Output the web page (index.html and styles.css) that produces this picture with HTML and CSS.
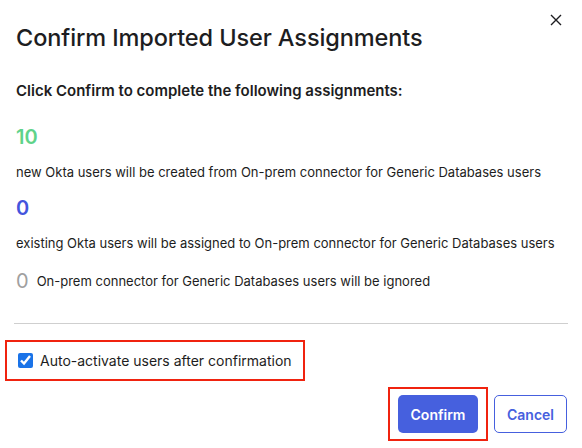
FILE: index.html
```html
<!DOCTYPE html>
<html lang="en">
<head>
<meta charset="utf-8">
<title>Confirm Imported User Assignments</title>
<link rel="stylesheet" href="styles.css">
</head>
<body>
<div class="dialog">
  <button class="close" aria-label="Close">
    <svg width="12" height="12" viewBox="0 0 12 12"><path d="M1 1L11 11M11 1L1 11" stroke="#1d1d21" stroke-width="1.4" fill="none"/></svg>
  </button>
  <h1 class="title">Confirm Imported User Assignments</h1>
  <p class="lead">Click Confirm to complete the following assignments:</p>

  <div class="stat">
    <div class="count count-new">10</div>
    <div class="desc">new Okta users will be created from On-prem connector for Generic Databases users</div>
  </div>
  <div class="stat">
    <div class="count count-existing">0</div>
    <div class="desc">existing Okta users will be assigned to On-prem connector for Generic Databases users</div>
  </div>
  <div class="stat-inline">
    <span class="count-ignored">0</span>
    <span class="desc">On-prem connector for Generic Databases users will be ignored</span>
  </div>

  <hr class="divider">

  <label class="auto-activate highlight">
    <input type="checkbox" checked>
    <span>Auto-activate users after confirmation</span>
  </label>

  <div class="actions">
    <div class="highlight confirm-wrap">
      <button class="btn btn-primary">Confirm</button>
    </div>
    <button class="btn btn-secondary">Cancel</button>
  </div>
</div>
</body>
</html>
```

FILE: styles.css
```css
* { box-sizing: border-box; }

body {
  margin: 0;
  background: #fff;
  font-family: Inter, "Noto Sans", sans-serif;
  color: #1d1d21;
}

.dialog {
  position: relative;
  width: 582px;
  height: 448px;
  padding: 0 14px 0 16px;
}

.close {
  position: absolute;
  top: 12px;
  right: 18px;
  width: 16px;
  height: 16px;
  padding: 2px;
  border: 0;
  background: none;
}

.title {
  margin: 0;
  padding-top: 23px;
  font-size: 23.5px;
  font-weight: 500;
  line-height: 30px;
  letter-spacing: -0.1px;
}

.lead {
  margin: 28px 0 0;
  font-size: 15px;
  font-weight: 600;
  line-height: 20px;
}

.count {
  font-size: 20px;
  font-weight: 600;
  line-height: 26px;
}

.count-new { margin-top: 23px; color: #5fd38a; }
.count-existing { margin-top: 14px; color: #4455dd; }

.desc {
  font-size: 13px;
  line-height: 18px;
  color: #1d1d21;
}

.stat .desc { margin-top: 13px; }

.stat-inline {
  display: flex;
  align-items: center;
  gap: 8px;
  margin-top: 16px;
}

.count-ignored {
  font-size: 20px;
  font-weight: 400;
  line-height: 26px;
  color: #a0a0a0;
}

.divider {
  margin: 29px 0 0 -2px;
  border: 0;
  border-top: 1px solid #cfcfcf;
}

.highlight {
  border: 2px solid #f0230f;
}

.auto-activate {
  display: inline-flex;
  align-items: center;
  gap: 7px;
  width: 300px;
  height: 41px;
  margin: 16px 0 0 -11px;
  padding-left: 11px;
  font-size: 14px;
}

.auto-activate input {
  width: 15px;
  height: 15px;
  margin: 0;
  accent-color: #1a73e8;
}

.actions {
  display: flex;
  justify-content: flex-end;
  align-items: center;
  gap: 6px;
  margin-top: 6px;
  padding-right: 1px;
}

.confirm-wrap {
  padding: 6px 8px;
}

.btn {
  height: 38px;
  border-radius: 5px;
  font-family: inherit;
  font-size: 14px;
  font-weight: 600;
}

.btn-primary {
  width: 80px;
  border: 0;
  background: #4660de;
  color: #fff;
}

.btn-secondary {
  width: 73px;
  border: 1px solid #4660de;
  background: #fff;
  color: #4660de;
}
```
